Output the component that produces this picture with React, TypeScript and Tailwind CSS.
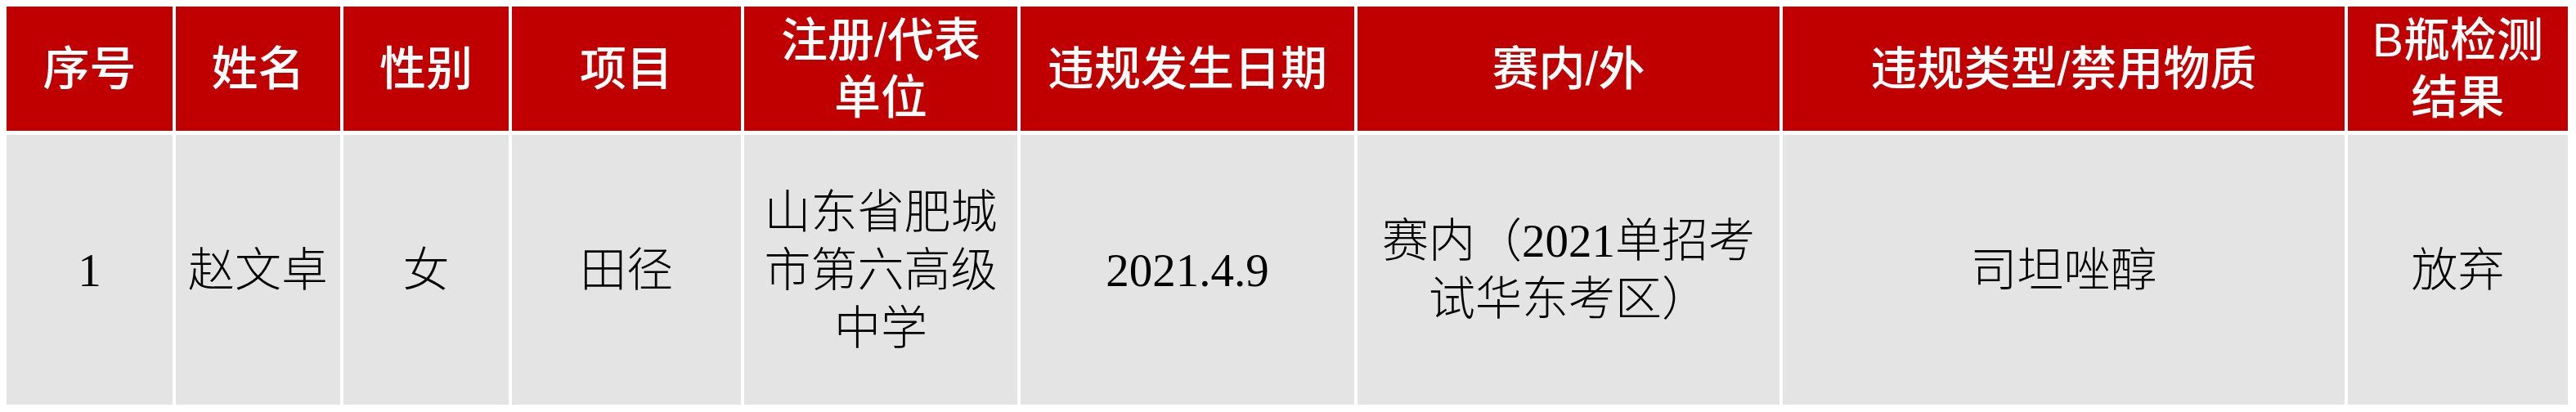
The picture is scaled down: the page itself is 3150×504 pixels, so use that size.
const headers: React.ReactNode[] = [
  '序号',
  '姓名',
  '性别',
  '项目',
  <>注册/代表<br />单位</>,
  '违规发生日期',
  '赛内/外',
  '违规类型/禁用物质',
  <>B瓶检测<br />结果</>,
];

const row: React.ReactNode[] = [
  '1',
  '赵文卓',
  '女',
  '田径',
  <>山东省肥城<br />市第六高级<br />中学</>,
  '2021.4.9',
  <>赛内（2021单招考<br />试华东考区）</>,
  '司坦唑醇',
  '放弃',
];

export default function App() {
  return (
    <div className="w-[3150px] h-[504px] bg-white pt-[8px] pl-[8px]">
      <div className="grid grid-cols-[203px_201px_202px_280px_334px_408px_516px_687px_269px] grid-rows-[152px_330px] gap-x-[4px] gap-y-[5px]">
        {headers.map((h, i) => (
          <div
            key={'h' + i}
            className="bg-[#c00000] text-white flex items-center justify-center text-center text-[57px] leading-[70px] font-medium font-['Liberation_Sans','Noto_Sans_CJK_SC',sans-serif]"
          >
            <div>{h}</div>
          </div>
        ))}
        {row.map((c, i) => (
          <div
            key={'c' + i}
            className="bg-[#e4e4e4] text-black flex items-center justify-center text-center text-[57px] leading-[71px] font-light font-['Liberation_Serif','Noto_Sans_CJK_SC',serif]"
          >
            <div>{c}</div>
          </div>
        ))}
      </div>
    </div>
  );
}
